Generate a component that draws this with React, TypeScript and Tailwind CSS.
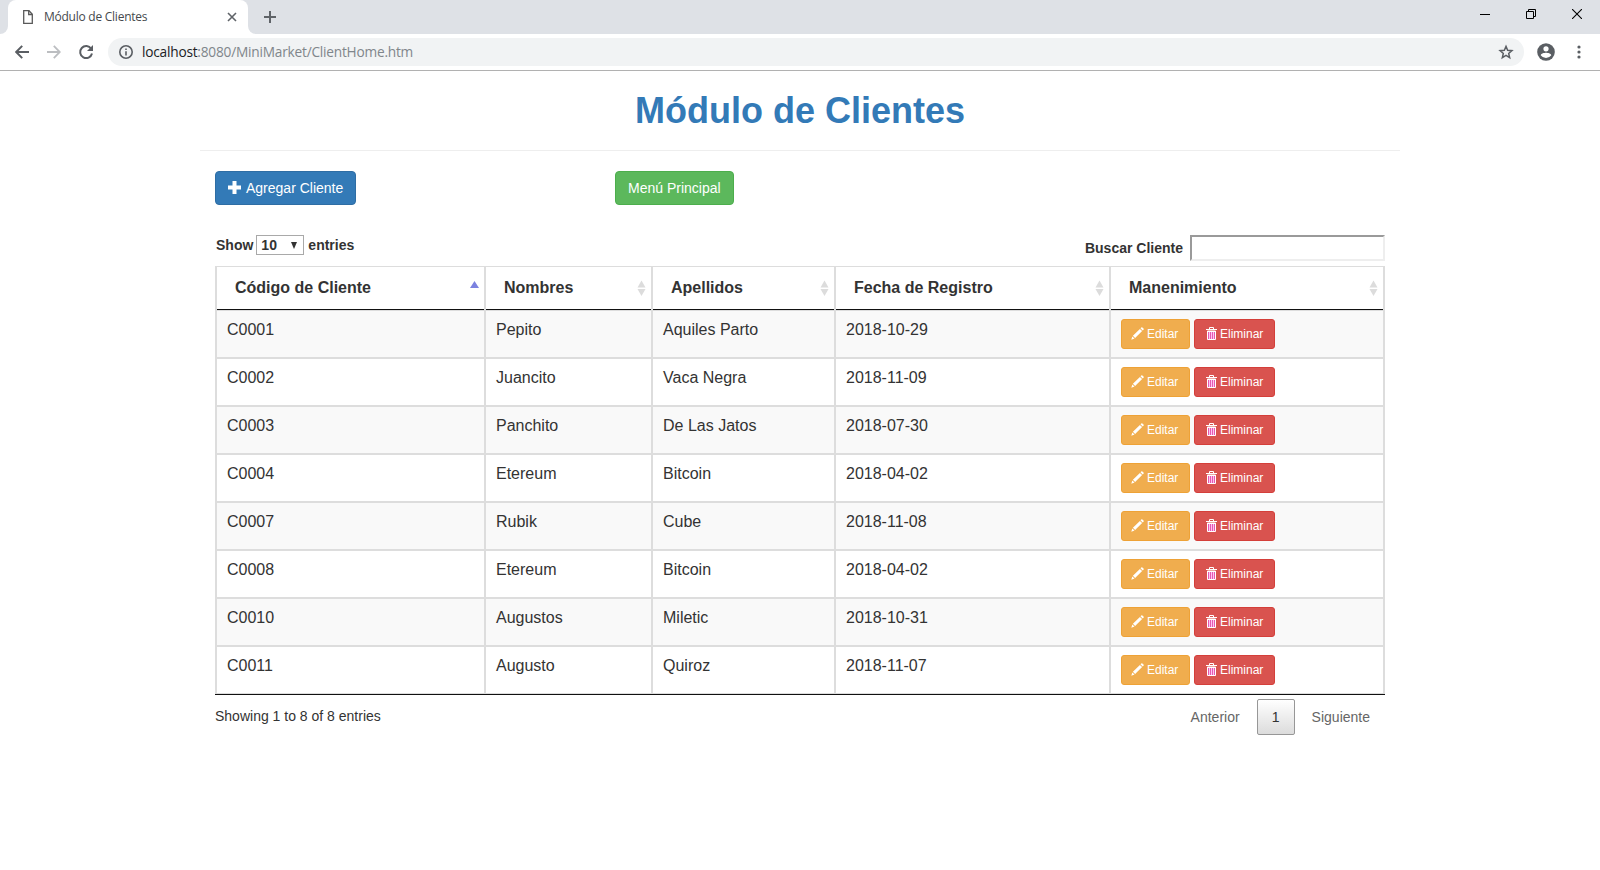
import React from "react";

const rows: string[][] = [
  ["C0001", "Pepito", "Aquiles Parto", "2018-10-29"],
  ["C0002", "Juancito", "Vaca Negra", "2018-11-09"],
  ["C0003", "Panchito", "De Las Jatos", "2018-07-30"],
  ["C0004", "Etereum", "Bitcoin", "2018-04-02"],
  ["C0007", "Rubik", "Cube", "2018-11-08"],
  ["C0008", "Etereum", "Bitcoin", "2018-04-02"],
  ["C0010", "Augustos", "Miletic", "2018-10-31"],
  ["C0011", "Augusto", "Quiroz", "2018-11-07"],
];

const headers = ["Código de Cliente", "Nombres", "Apellidos", "Fecha de Registro", "Manenimiento"];

const gridCols = "grid grid-cols-[269px_167px_183px_275px_276px]";

function TabStrip() {
  return (
    <div className="flex h-[34px] items-stretch bg-[#dee1e6]">
      <div className="w-2 bg-white">
        <div className="h-full rounded-br-lg bg-[#dee1e6]" />
      </div>
      <div className="flex w-[240px] items-center rounded-t-lg bg-white pl-[15px] pr-[11px]">
        <svg width="10" height="14" viewBox="0 0 10 14" fill="none" stroke="#5a5a5a" strokeWidth="1.3">
          <path d="M.7.7H6L9.300 4.200V13.300H.7z" />
          <path d="M5.700.7V4.500H9.300" />
        </svg>
        <span className="ml-[11px] flex-1 whitespace-nowrap text-[12px] leading-4 text-[#45494d]">
          <span className="inline-block tracking-[-0.25px]">Módulo de Clientes</span>
        </span>
        <svg width="10" height="10" viewBox="0 0 10 10" stroke="#5f6368" strokeWidth="1.6">
          <path d="M1 1l8 8M9 1l-8 8" />
        </svg>
      </div>
      <div className="w-2 bg-white">
        <div className="h-full rounded-bl-lg bg-[#dee1e6]" />
      </div>
      <svg className="ml-2 mt-[11px]" width="12" height="12" viewBox="0 0 12 12" stroke="#5f6368" strokeWidth="2">
        <path d="M6 0v12M0 6h12" />
      </svg>
      <div className="ml-auto flex items-start">
        <svg className="mr-9 mt-[9px]" width="10" height="11" viewBox="0 0 10 11">
          <path d="M0 5.500h10" stroke="#000" />
        </svg>
        <svg className="mr-9 mt-[9px]" width="10" height="10" viewBox="0 0 10 10" fill="none" stroke="#000">
          <path d="M.5 2.500h7v7h-7zM2.500 2.500v-2h7v7h-2" />
        </svg>
        <svg className="mr-[18px] mt-[9px]" width="10" height="10" viewBox="0 0 10 10" stroke="#000" strokeWidth="1.1">
          <path d="M0 0l10 10M10 0L0 10" />
        </svg>
      </div>
    </div>
  );
}

function Toolbar() {
  return (
    <div className="flex h-9 items-center bg-white">
      <svg className="ml-[15px]" width="14" height="14" viewBox="0 0 14 14" fill="none" stroke="#5a5e63" strokeWidth="2">
        <path d="M14 7H1.500M7.200.9L1.200 7l6 6.100" />
      </svg>
      <svg className="ml-[18px]" width="14" height="14" viewBox="0 0 14 14" fill="none" stroke="#bcbec1" strokeWidth="1.8">
        <path d="M0 7h12.500M6.800.9l6 6.100-6 6.100" />
      </svg>
      <svg className="ml-[17px]" width="16" height="16" viewBox="0 0 16 16">
        <path d="M13.200 4.800A6 6 0 1 0 14 9.500" fill="none" stroke="#5a5e63" strokeWidth="2" />
        <path d="M15 1v6H9z" fill="#5a5e63" />
      </svg>
      <div className="ml-[14px] flex h-7 w-[1416px] items-center rounded-full bg-[#f1f3f4] pl-[11px] pr-[10px]">
        <svg width="14" height="14" viewBox="0 0 14 14" fill="none" stroke="#5a5e63">
          <circle cx="7" cy="7" r="6.200" strokeWidth="1.600" />
          <path d="M7 6.200v4.200M7 3.600v1.500" strokeWidth="1.600" />
        </svg>
        <div className="ml-[9px] flex-1 whitespace-nowrap text-[13.7px] leading-5 text-[#80868b]">
          <span className="inline-block tracking-[-0.22px]">
            <span className="text-[#202124]">localhost</span>:8080/MiniMarket/ClientHome.htm
          </span>
        </div>
        <svg width="16" height="16" viewBox="0 0 16 16" fill="none" stroke="#5a5e63" strokeWidth="1.500">
          <path d="M8 2.400l1.650 3.900 4.250.37-3.220 2.800.97 4.130L8 11.400l-3.650 2.200.97-4.130L2.100 6.670l4.250-.37z" />
        </svg>
      </div>
      <svg className="ml-[13px]" width="18" height="18" viewBox="0 0 18 18">
        <circle cx="9" cy="9" r="8.800" fill="#5a5e63" />
        <circle cx="9" cy="5.800" r="2.600" fill="#fff" />
        <path d="M3.700 12.200C4 10.400 7.300 9.700 9 9.700s5 .7 5.300 2.500A6.500 6.500 0 0 1 9 14.900a6.500 6.500 0 0 1-5.300-2.700z" fill="#fff" />
      </svg>
      <svg className="ml-[22px]" width="4" height="14" viewBox="0 0 4 14" fill="#5a5e63">
        <circle cx="2" cy="2" r="1.600" />
        <circle cx="2" cy="7" r="1.600" />
        <circle cx="2" cy="12" r="1.600" />
      </svg>
    </div>
  );
}

function SortIcon({ active }: { active: boolean }) {
  return (
    <svg width="9" height="16" viewBox="0 0 9 16" className="shrink-0">
      {active ? (
        <path d="M4.500 1L9 8H0z" fill="#7c82e0" />
      ) : (
        <g fill="#dcdcdc">
          <path d="M4.500 0.500L8.500 7.500H.5z" />
          <path d="M4.500 16L.5 9h8z" />
        </g>
      )}
    </svg>
  );
}

function Pencil() {
  return (
    <svg className="-mt-px" width="13" height="13" viewBox="0 0 13 13" fill="#fff">
      <path d="M10.300.5a.8.8 0 0 1 1.100 0l1.100 1.100a.8.8 0 0 1 0 1.100l-.8.800-2.200-2.200zM8.900 1.900l2.200 2.200-7 6.900-2.200-2.200zM1.300 9.500l2.200 2.100L.3 12.800z" />
    </svg>
  );
}

function Trash() {
  return (
    <svg className="-mt-0.5" width="11" height="13" viewBox="0 0 11 13">
      <path d="M3.500 2V.5h4V2" fill="none" stroke="#fff" />
      <path d="M0 2.500h11" stroke="#fff" />
      <path d="M1.500 4v8.500h8V4z" fill="#e45bb0" stroke="#fff" />
      <path d="M3.500 5v7M5.500 5v7M7.500 5v7" stroke="#ffc4f4" />
      <path d="M1 4.500h9" stroke="#fff" />
    </svg>
  );
}

export default function App() {
  return (
    <div className="h-[870px] w-[1600px] overflow-hidden bg-white font-['Liberation_Sans',Arial,sans-serif] text-[14px] leading-5 text-[#333]">
      <header className="border-b border-[#b1b1b1] font-['Open_Sans','Noto_Sans',sans-serif]">
        <TabStrip />
        <Toolbar />
      </header>

      <main className="mx-auto w-[1200px]">
        <h1 className="h-[79px] pt-5 text-center text-[36px] font-bold leading-10 text-[#337ab7]">Módulo de Clientes</h1>
        <div className="border-t border-[#eee]" />

        <div className="px-[15px]">
          <div className="mt-5 grid grid-cols-[400px_1fr]">
            <div>
              <button className="flex h-[34px] w-[141px] items-center whitespace-nowrap rounded border border-[#2e6da4] bg-[#337ab7] pl-3 text-white">
                <svg className="-mt-px" width="13" height="13" viewBox="0 0 13 13" fill="#fff">
                  <path d="M4.500 0h4v4.500H13v4H8.500V13h-4V8.500H0v-4h4.500z" />
                </svg>
                <span className="ml-[5px]">Agregar Cliente</span>
              </button>
            </div>
            <div>
              <button className="flex h-[34px] w-[119px] items-center whitespace-nowrap rounded border border-[#4cae4c] bg-[#5cb85c] pl-3 text-white">
                Menú Principal
              </button>
            </div>
          </div>

          <div className="mt-[30px] flex h-[31px] items-start justify-between font-bold">
            <label className="flex items-center pl-px">
              Show
              <span className="ml-[3px] mr-1 flex h-5 w-12 items-center justify-between border border-[#a9a9a9] pl-1 pr-[6px]">
                10
                <svg width="6" height="7" viewBox="0 0 6 7" fill="#333">
                  <path d="M0 0h6L3 7z" />
                </svg>
              </span>
              entries
            </label>
            <label className="flex items-center">
              Buscar Cliente
              <input className="ml-[7px] h-[26px] w-[195px] border-2 border-b-[#eee] border-l-[#9a9a9a] border-r-[#eee] border-t-[#9a9a9a] bg-white" />
            </label>
          </div>

          <div className="border-b border-[#111] text-[16px] leading-[23px]">
            <div className={`${gridCols} h-[45px] border-b border-t border-[#ddd] font-bold`}>
              {headers.map((h, i) => (
                <div key={h} className="flex border-l-2 border-[#ddd] last:border-r-2">
                  <div className="flex flex-1 items-center justify-between border-b border-[#111] pl-[18px] pr-[5px]">
                    <span className="-mt-0.5">{h}</span>
                    <SortIcon active={i === 0} />
                  </div>
                </div>
              ))}
            </div>
            {rows.map((r) => (
              <div key={r[0]} className={`${gridCols} h-12 border-b-2 border-[#ddd] odd:bg-white even:bg-[#f9f9f9] last:h-[47px] last:border-b`}>
                {r.map((c, i) => (
                  <div key={i} className="border-l-2 border-[#ddd] pl-[10px] pt-[7px]">
                    {c}
                  </div>
                ))}
                <div className="flex gap-1 border-x-2 border-[#ddd] bg-inherit pl-[10px] pt-2 text-[12px]">
                  <button className="flex h-[30px] w-[69px] items-center gap-[3px] rounded-[3px] border border-[#eea236] bg-[#f0ad4e] pl-[9px] text-white">
                    <Pencil />
                    Editar
                  </button>
                  <button className="flex h-[30px] w-[81px] items-center gap-[3px] rounded-[3px] border border-[#d43f3a] bg-[#d9534f] pl-[11px] text-white">
                    <Trash />
                    Eliminar
                  </button>
                </div>
              </div>
            ))}
          </div>

          <div className="flex items-start justify-between">
            <div className="pt-[11px]">Showing 1 to 8 of 8 entries</div>
            <div className="flex items-center pr-[15px] pt-1 text-[#666]">
              <span>Anterior</span>
              <span className="ml-[17px] mr-[17px] flex h-9 w-[38px] items-center justify-center rounded-[2px] border border-[#979797] bg-linear-to-b from-white to-[#dcdcdc] text-[#333]">
                1
              </span>
              <span>Siguiente</span>
            </div>
          </div>
        </div>
      </main>
    </div>
  );
}
